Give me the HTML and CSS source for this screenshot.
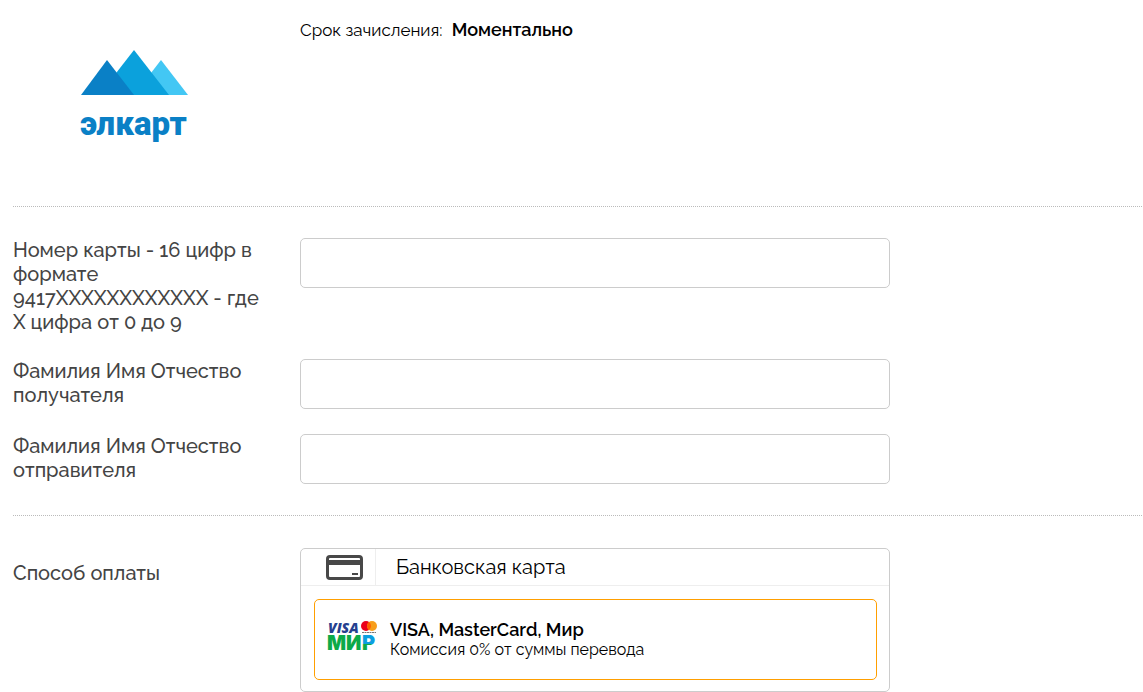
FILE: index.html
```html
<!DOCTYPE html>
<html lang="ru">
<head>
    <meta charset="UTF-8">
    <meta name="viewport" content="width=device-width, initial-scale=1.0">
    <title>Элкарт</title>
    <link rel="stylesheet" href="styles.css">
</head>
<body>
    <form class="payment">
        <!-- Provider -->
        <section class="section row provider">
            <div class="provider-logo">
                <svg width="108" height="96" viewBox="0 0 108 96" role="img" aria-label="Элкарт">
                    <path d="M81 10 L108 45 H54 Z" fill="#43c7f4"/>
                    <path d="M54 0 L89 45 H19 Z" fill="#0ba1dc"/>
                    <path d="M27 10 L54 45 H1 Z" fill="#0a80c6"/>
                    <text class="logo-text" x="0" y="85">элкарт</text>
                </svg>
            </div>
            <p class="term">Срок зачисления: <b>Моментально</b></p>
        </section>

        <!-- Fields -->
        <section class="section fields">
            <div class="row">
                <label class="label" for="card">Номер карты - 16 цифр в формате 9417XXXXXXXXXXXX - где X цифра от 0 до 9</label>
                <input class="input" type="text" id="card" name="card">
            </div>
            <div class="row">
                <label class="label" for="recipient">Фамилия Имя Отчество получателя</label>
                <input class="input" type="text" id="recipient" name="recipient">
            </div>
            <div class="row">
                <label class="label" for="sender">Фамилия Имя Отчество отправителя</label>
                <input class="input" type="text" id="sender" name="sender">
            </div>
        </section>

        <!-- Payment method -->
        <section class="section row">
            <div class="label method-label" id="method">Способ оплаты</div>
            <div class="method" role="group" aria-labelledby="method">
                <div class="method-header">
                    <div class="method-icon">
                        <svg width="37" height="26" viewBox="0 0 37 26">
                            <rect x="1.5" y="2.5" width="34" height="22" rx="2.5" fill="none" stroke="#484848" stroke-width="3"/>
                            <path d="M1 6 H36 V11 H1 Z M26 19 H32 V21 H26 Z" fill="#484848"/>
                        </svg>
                    </div>
                    <div class="method-title">Банковская карта</div>
                </div>
                <button class="option" type="button">
                    <svg class="cards-logo" width="50" height="34" viewBox="0 0 50 34">
                        <defs>
                            <linearGradient id="mir" x1="0" y1="0" x2="0" y2="1">
                                <stop offset="0.54" stop-color="#0c9fe0"/>
                                <stop offset="0.54" stop-color="#0caa48"/>
                            </linearGradient>
                        </defs>
                        <text class="visa" x="1" y="13">VISA</text>
                        <circle cx="39" cy="6" r="5" fill="#eb001b"/>
                        <circle cx="45" cy="6" r="5" fill="#f79e1b"/>
                        <path d="M42 2 A5 5 0 0 1 42 10 A5 5 0 0 1 42 2 Z" fill="#ff5f00"/>
                        <path d="M35 12.500 H49" stroke="#777" stroke-width="1" stroke-dasharray="2 .5"/>
                        <text class="mir" x="0" y="30">МИ</text>
                        <text class="mir mir-end" x="35" y="30">Р</text>
                    </svg>
                    <span class="option-text">
                        <b>VISA, MasterCard, Мир</b>
                        <span>Комиссия 0% от суммы перевода</span>
                    </span>
                </button>
            </div>
        </section>
    </form>
</body>
</html>
```
FILE: styles.css
```css
body {
    margin: 0;
    background-color: #fff;
    color: #000;
    font-family: Raleway, Lato, sans-serif;
    font-size: 17px;
    line-height: 24px;
}

b {
    font-size: 18px;
    font-weight: 600;
}

.payment {
    padding: 0 1px 0 13px;
}

/* Sections are divided by a dotted line */
.section {
    padding: 32px 0 31px;
}

.section + .section {
    border-top: 1px dotted #bbb;
    padding-top: 31px;
}

.section:last-child {
    padding: 32px 0 0;
}

.row {
    display: grid;
    grid-template-columns: 262px minmax(0, 590px);
    column-gap: 25px;
    align-items: start;
}

/* Provider */
.section.provider {
    padding: 18px 0 60px;
}

.provider-logo {
    padding: 32px 0 0 67px;
}

.provider-logo svg {
    display: block;
    overflow: visible;
}

.logo-text {
    font-family: Roboto, sans-serif;
    font-size: 33px;
    font-weight: 900;
    fill: #0a80c6;
}

.term {
    margin: 0;
}

.term b {
    margin-left: 5px;
}

/* Fields */
.fields {
    display: grid;
    row-gap: 25px;
}

.label {
    color: #444;
    font-size: 20px;
    font-weight: 500;
}

.input {
    box-sizing: border-box;
    width: 100%;
    height: 50px;
    padding: 0 15px;
    border: 1px solid #ccc;
    border-radius: 5px;
    background-color: #fff;
    font: inherit;
}

/* Payment method */
.method-label {
    padding-top: 13px;
}

.method {
    border: 1px solid #ccc;
    border-radius: 5px;
}

.method-header {
    display: flex;
    height: 36px;
    border-bottom: 1px solid #eee;
}

.method-icon {
    display: flex;
    align-items: center;
    padding: 0 12px 0 25px;
    border-right: 1px solid #eee;
}

.method-title {
    padding: 6px 20px;
    font-size: 20px;
}

.option {
    display: flex;
    align-items: flex-start;
    box-sizing: border-box;
    width: calc(100% - 25px);
    height: 81px;
    margin: 13px 12px 11px 13px;
    padding: 20px 12px;
    gap: 13px;
    border: 1px solid #ff9f00;
    border-radius: 5px;
    background-color: #fff;
    color: #000;
    font: inherit;
    line-height: 20px;
    text-align: left;
    cursor: pointer;
}

.cards-logo {
    overflow: visible;
}

.option-text b {
    display: block;
}

.option-text span {
    display: block;
    font-size: 16px;
}

.visa {
    font: italic 800 14px "Open Sans", sans-serif;
    fill: #26408f;
}

.mir {
    font: 900 20px Inter, sans-serif;
    fill: #0caa48;
}

.mir-end {
    fill: url(#mir);
}
```
